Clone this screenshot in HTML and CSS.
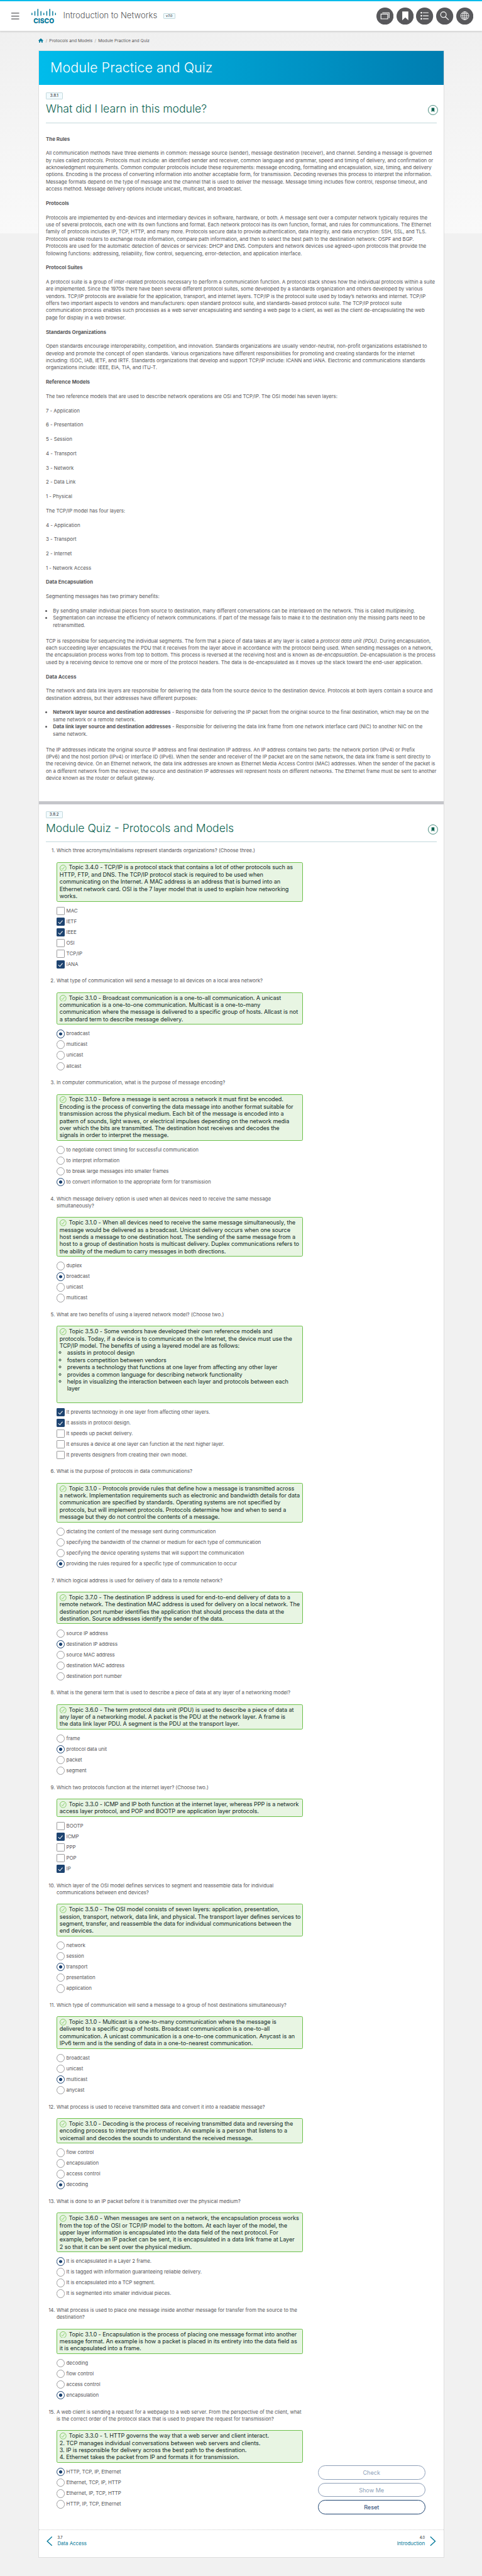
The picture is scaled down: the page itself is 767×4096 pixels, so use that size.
FILE: index.html
```html
<!DOCTYPE html>
<html lang="en">
<head>
<meta charset="utf-8">
<title>Module Practice and Quiz</title>
<link rel="stylesheet" href="styles.css">
</head>
<body>
<svg class="defs" width="0" height="0">
  <symbol id="ok" viewBox="0 0 19 19"><circle cx="9.5" cy="9.5" r="8.6" fill="none" stroke="#6cc04a" stroke-width="1.5"/><path d="M5.2 10l3 3 5.3-7.5" fill="none" stroke="#6cc04a" stroke-width="1.4"/></symbol>
  <symbol id="mark" viewBox="0 0 28 28"><circle cx="14" cy="14" r="13.2" fill="#fff" stroke="#0b6351" stroke-width="1.3"/><path d="M10 8h8v12l-4-3.6-4 3.6z" fill="#0b6351"/></symbol>
</svg>
<div class="page">
<header class="top">
  <svg class="burger" width="22" height="20" viewBox="0 0 22 20"><path d="M0 1.4h22M0 9.7h22M0 18h22" stroke="#58585b" stroke-width="2.2"/></svg>
  <svg class="logo" width="69" height="46" viewBox="0 0 69 46"><path d="M1.5 12.5v4M9.7 7.500v10.500M18.100 1.500v18M26.600 7.500v10.500M34.700 12.500v4M43 7.500v10.500M51.400 1.500v18M59.600 7.500v10.500M67.500 12.500v4" stroke="#04799a" stroke-width="2.600" stroke-linecap="round"/><text x="5.500" y="40.500" textLength="58" lengthAdjust="spacingAndGlyphs">CISCO</text></svg>
  <div class="course">Introduction to Networks</div>
  <span class="tag ver">v7.0</span>
  <nav class="tools">
    <svg viewBox="0 0 48 48"><circle cx="24" cy="24" r="24"/><g class="ln"><path d="M16.500 14.500h19v15"/><path d="M12.700 18.200h19v13.500h-19z"/></g></svg>
    <svg viewBox="0 0 48 48"><circle cx="24" cy="24" r="24"/><path d="M16 11h17v24.500l-8.500-8-8.500 8z" fill="#fff"/></svg>
    <svg viewBox="0 0 48 48"><circle cx="24" cy="24" r="24"/><g class="ln"><path d="M19.500 14.500h15.500M19.500 23h15.500M19.500 31.500h15.500"/></g><g fill="#fff"><circle cx="15" cy="14.500" r="2.300"/><circle cx="15" cy="23" r="2.300"/><circle cx="15" cy="31.500" r="2.300"/></g></svg>
    <svg viewBox="0 0 48 48"><circle cx="24" cy="24" r="24"/><g class="ln"><circle cx="20.500" cy="20" r="7.800"/><path d="M25.500 25.500l9.500 9"/></g></svg>
    <svg viewBox="0 0 48 48"><circle cx="24" cy="24" r="24"/><g class="ln thin"><circle cx="24" cy="23" r="11.300"/><ellipse cx="24" cy="23" rx="5.500" ry="11.300"/><path d="M24 11.700v22.600M12.700 23h22.600M14.500 17h19M14.500 29h19"/></g></svg>
  </nav>
</header>
<div class="crumbs"><svg width="14" height="12" viewBox="0 0 14 12"><path d="M7 0l7 6-1 1-1-.8V12H8.800V8H5.200v4H2V6.200L1 7 0 6z" fill="#04799a"/></svg><i>/</i><span>Protocols and Models</span><i>/</i><span>Module Practice and Quiz</span></div>
<main class="card">
<h1>Module Practice and Quiz</h1>
<section class="sec learn">
<span class="tag">3.8.1</span>
<div class="head"><h2>What did I learn in this module?</h2><svg width="28" height="28"><use href="#mark"/></svg></div>
<div class="text">
<h3>The Rules</h3>
<p>All communication methods have three elements in common: message source (sender), message destination (receiver), and channel. Sending a message is governed<br>by rules called <em>protocols</em>. Protocols must include: an identified sender and receiver, common language and grammar, speed and timing of delivery, and confirmation or<br>acknowledgment requirements. Common computer protocols include these requirements: message encoding, formatting and encapsulation, size, timing, and delivery<br>options. Encoding is the process of converting information into another acceptable form, for transmission. Decoding reverses this process to interpret the information.<br>Message formats depend on the type of message and the channel that is used to deliver the message. Message timing includes flow control, response timeout, and<br>access method. Message delivery options include unicast, multicast, and broadcast.</p>
<h3>Protocols</h3>
<p>Protocols are implemented by end-devices and intermediary devices in software, hardware, or both. A message sent over a computer network typically requires the<br>use of several protocols, each one with its own functions and format. Each network protocol has its own function, format, and rules for communications. The Ethernet<br>family of protocols includes IP, TCP, HTTP, and many more. Protocols secure data to provide authentication, data integrity, and data encryption: SSH, SSL, and TLS.<br>Protocols enable routers to exchange route information, compare path information, and then to select the best path to the destination network: OSPF and BGP.<br>Protocols are used for the automatic detection of devices or services: DHCP and DNS. Computers and network devices use agreed-upon protocols that provide the<br>following functions: addressing, reliability, flow control, sequencing, error-detection, and application interface.</p>
<h3>Protocol Suites</h3>
<p>A protocol suite is a group of inter-related protocols necessary to perform a communication function. A protocol stack shows how the individual protocols within a suite<br>are implemented. Since the 1970s there have been several different protocol suites, some developed by a standards organization and others developed by various<br>vendors. TCP/IP protocols are available for the application, transport, and internet layers. TCP/IP is the protocol suite used by today’s networks and internet. TCP/IP<br>offers two important aspects to vendors and manufacturers: open standard protocol suite, and standards-based protocol suite. The TCP/IP protocol suite<br>communication process enables such processes as a web server encapsulating and sending a web page to a client, as well as the client de-encapsulating the web<br>page for display in a web browser.</p>
<h3>Standards Organizations</h3>
<p>Open standards encourage interoperability, competition, and innovation. Standards organizations are usually vendor-neutral, non-profit organizations established to<br>develop and promote the concept of open standards. Various organizations have different responsibilities for promoting and creating standards for the internet<br>including: ISOC, IAB, IETF, and IRTF. Standards organizations that develop and support TCP/IP include: ICANN and IANA. Electronic and communications standards<br>organizations include: IEEE, EIA, TIA, and ITU-T.</p>
<h3>Reference Models</h3>
<p>The two reference models that are used to describe network operations are OSI and TCP/IP. The OSI model has seven layers:</p>
<p>7 - Application</p>
<p>6 - Presentation</p>
<p>5 - Session</p>
<p>4 - Transport</p>
<p>3 - Network</p>
<p>2 - Data Link</p>
<p>1 - Physical</p>
<p>The TCP/IP model has four layers:</p>
<p>4 - Application</p>
<p>3 - Transport</p>
<p>2 - Internet</p>
<p>1 - Network Access</p>
<h3>Data Encapsulation</h3>
<p>Segmenting messages has two primary benefits:</p>
<ul>
<li>By sending smaller individual pieces from source to destination, many different conversations can be interleaved on the network. This is called <em>multiplexing</em>.</li>
<li>Segmentation can increase the efficiency of network communications. If part of the message fails to make it to the destination only the missing parts need to be<br>retransmitted.</li>
</ul>
<p>TCP is responsible for sequencing the individual segments. The form that a piece of data takes at any layer is called a <em>protocol data unit (PDU)</em>. During encapsulation,<br>each succeeding layer encapsulates the PDU that it receives from the layer above in accordance with the protocol being used. When sending messages on a network,<br>the encapsulation process works from top to bottom. This process is reversed at the receiving host and is known as <em>de-encapsulation</em>. De-encapsulation is the process<br>used by a receiving device to remove one or more of the protocol headers. The data is de-encapsulated as it moves up the stack toward the end-user application.</p>
<h3>Data Access</h3>
<p>The network and data link layers are responsible for delivering the data from the source device to the destination device. Protocols at both layers contain a source and<br>destination address, but their addresses have different purposes:</p>
<ul>
<li><b>Network layer source and destination addresses</b> - Responsible for delivering the IP packet from the original source to the final destination, which may be on the<br>same network or a remote network.</li>
<li><b>Data link layer source and destination addresses</b> - Responsible for delivering the data link frame from one network interface card (NIC) to another NIC on the<br>same network.</li>
</ul>
<p>The IP addresses indicate the original source IP address and final destination IP address. An IP address contains two parts: the network portion (IPv4) or Prefix<br>(IPv6) and the host portion (IPv4) or Interface ID (IPv6). When the sender and receiver of the IP packet are on the same network, the data link frame is sent directly to<br>the receiving device. On an Ethernet network, the data link addresses are known as Ethernet Media Access Control (MAC) addresses. When the sender of the packet is<br>on a different network from the receiver, the source and destination IP addresses will represent hosts on different networks. The Ethernet frame must be sent to another<br>device known as the router or default gateway.</p>
</div>
</section>
<div class="bar"></div>
<section class="sec quiz">
<span class="tag">3.8.2</span>
<div class="head"><h2>Module Quiz - Protocols and Models</h2><svg width="28" height="28"><use href="#mark"/></svg></div>
<div class="cols">
<ol class="qs">
<li><div class="q">Which three acronyms/initialisms represent standards organizations? (Choose three.)</div>
<div class="box"><svg><use href="#ok"/></svg>Topic 3.4.0 - TCP/IP is a protocol stack that contains a lot of other protocols such as<br>HTTP, FTP, and DNS. The TCP/IP protocol stack is required to be used when<br>communicating on the Internet. A MAC address is an address that is burned into an<br>Ethernet network card. OSI is the 7 layer model that is used to explain how networking<br>works.</div>
<ul class="opts check"><li>MAC</li><li class="on">IETF</li><li class="on">IEEE</li><li>OSI</li><li>TCP/IP</li><li class="on">IANA</li></ul></li>
<li><div class="q">What type of communication will send a message to all devices on a local area network?</div>
<div class="box"><svg><use href="#ok"/></svg>Topic 3.1.0 - Broadcast communication is a one-to-all communication. A unicast<br>communication is a one-to-one communication. Multicast is a one-to-many<br>communication where the message is delivered to a specific group of hosts. Allcast is not<br>a standard term to describe message delivery.</div>
<ul class="opts"><li class="on">broadcast</li><li>multicast</li><li>unicast</li><li>allcast</li></ul></li>
<li><div class="q">In computer communication, what is the purpose of message encoding?</div>
<div class="box"><svg><use href="#ok"/></svg>Topic 3.1.0 - Before a message is sent across a network it must first be encoded.<br>Encoding is the process of converting the data message into another format suitable for<br>transmission across the physical medium. Each bit of the message is encoded into a<br>pattern of sounds, light waves, or electrical impulses depending on the network media<br>over which the bits are transmitted. The destination host receives and decodes the<br>signals in order to interpret the message.</div>
<ul class="opts"><li>to negotiate correct timing for successful communication</li><li>to interpret information</li><li>to break large messages into smaller frames</li><li class="on">to convert information to the appropriate form for transmission</li></ul></li>
<li><div class="q">Which message delivery option is used when all devices need to receive the same message<br>simultaneously?</div>
<div class="box"><svg><use href="#ok"/></svg>Topic 3.1.0 - When all devices need to receive the same message simultaneously, the<br>message would be delivered as a broadcast. Unicast delivery occurs when one source<br>host sends a message to one destination host. The sending of the same message from a<br>host to a group of destination hosts is multicast delivery. Duplex communications refers to<br>the ability of the medium to carry messages in both directions.</div>
<ul class="opts"><li>duplex</li><li class="on">broadcast</li><li>unicast</li><li>multicast</li></ul></li>
<li><div class="q">What are two benefits of using a layered network model? (Choose two.)</div>
<div class="box"><svg><use href="#ok"/></svg>Topic 3.5.0 - Some vendors have developed their own reference models and<br>protocols. Today, if a device is to communicate on the Internet, the device must use the<br>TCP/IP model. The benefits of using a layered model are as follows:
<ul class="circ"><li>assists in protocol design</li><li>fosters competition between vendors</li><li>prevents a technology that functions at one layer from affecting any other layer</li><li>provides a common language for describing network functionality</li><li>helps in visualizing the interaction between each layer and protocols between each<br>layer</li></ul></div>
<ul class="opts check"><li class="on">It prevents technology in one layer from affecting other layers.</li><li class="on">It assists in protocol design.</li><li>It speeds up packet delivery.</li><li>It ensures a device at one layer can function at the next higher layer.</li><li>It prevents designers from creating their own model.</li></ul></li>
<li><div class="q">What is the purpose of protocols in data communications?</div>
<div class="box"><svg><use href="#ok"/></svg>Topic 3.1.0 - Protocols provide rules that define how a message is transmitted across<br>a network. Implementation requirements such as electronic and bandwidth details for data<br>communication are specified by standards. Operating systems are not specified by<br>protocols, but will implement protocols. Protocols determine how and when to send a<br>message but they do not control the contents of a message.</div>
<ul class="opts"><li>dictating the content of the message sent during communication</li><li>specifying the bandwidth of the channel or medium for each type of communication</li><li>specifying the device operating systems that will support the communication</li><li class="on">providing the rules required for a specific type of communication to occur</li></ul></li>
<li><div class="q">Which logical address is used for delivery of data to a remote network?</div>
<div class="box"><svg><use href="#ok"/></svg>Topic 3.7.0 - The destination IP address is used for end-to-end delivery of data to a<br>remote network. The destination MAC address is used for delivery on a local network. The<br>destination port number identifies the application that should process the data at the<br>destination. Source addresses identify the sender of the data.</div>
<ul class="opts"><li>source IP address</li><li class="on">destination IP address</li><li>source MAC address</li><li>destination MAC address</li><li>destination port number</li></ul></li>
<li><div class="q">What is the general term that is used to describe a piece of data at any layer of a networking model?</div>
<div class="box"><svg><use href="#ok"/></svg>Topic 3.6.0 - The term protocol data unit (PDU) is used to describe a piece of data at<br>any layer of a networking model. A packet is the PDU at the network layer. A frame is<br>the data link layer PDU. A segment is the PDU at the transport layer.</div>
<ul class="opts"><li>frame</li><li class="on">protocol data unit</li><li>packet</li><li>segment</li></ul></li>
<li><div class="q">Which two protocols function at the internet layer? (Choose two.)</div>
<div class="box"><svg><use href="#ok"/></svg>Topic 3.3.0 - ICMP and IP both function at the internet layer, whereas PPP is a network<br>access layer protocol, and POP and BOOTP are application layer protocols.</div>
<ul class="opts check"><li>BOOTP</li><li class="on">ICMP</li><li>PPP</li><li>POP</li><li class="on">IP</li></ul></li>
<li><div class="q">Which layer of the OSI model defines services to segment and reassemble data for individual<br>communications between end devices?</div>
<div class="box"><svg><use href="#ok"/></svg>Topic 3.5.0 - The OSI model consists of seven layers: application, presentation,<br>session, transport, network, data link, and physical. The transport layer defines services to<br>segment, transfer, and reassemble the data for individual communications between the<br>end devices.</div>
<ul class="opts"><li>network</li><li>session</li><li class="on">transport</li><li>presentation</li><li>application</li></ul></li>
<li><div class="q">Which type of communication will send a message to a group of host destinations simultaneously?</div>
<div class="box"><svg><use href="#ok"/></svg>Topic 3.1.0 - Multicast is a one-to-many communication where the message is<br>delivered to a specific group of hosts. Broadcast communication is a one-to-all<br>communication. A unicast communication is a one-to-one communication. Anycast is an<br>IPv6 term and is the sending of data in a one-to-nearest communication.</div>
<ul class="opts"><li>broadcast</li><li>unicast</li><li class="on">multicast</li><li>anycast</li></ul></li>
<li><div class="q">What process is used to receive transmitted data and convert it into a readable message?</div>
<div class="box"><svg><use href="#ok"/></svg>Topic 3.1.0 - Decoding is the process of receiving transmitted data and reversing the<br>encoding process to interpret the information. An example is a person that listens to a<br>voicemail and decodes the sounds to understand the received message.</div>
<ul class="opts"><li>flow control</li><li>encapsulation</li><li>access control</li><li class="on">decoding</li></ul></li>
<li><div class="q">What is done to an IP packet before it is transmitted over the physical medium?</div>
<div class="box"><svg><use href="#ok"/></svg>Topic 3.6.0 - When messages are sent on a network, the encapsulation process works<br>from the top of the OSI or TCP/IP model to the bottom. At each layer of the model, the<br>upper layer information is encapsulated into the data field of the next protocol. For<br>example, before an IP packet can be sent, it is encapsulated in a data link frame at Layer<br>2 so that it can be sent over the physical medium.</div>
<ul class="opts"><li class="on">It is encapsulated in a Layer 2 frame.</li><li>It is tagged with information guaranteeing reliable delivery.</li><li>It is encapsulated into a TCP segment.</li><li>It is segmented into smaller individual pieces.</li></ul></li>
<li><div class="q">What process is used to place one message inside another message for transfer from the source to the<br>destination?</div>
<div class="box"><svg><use href="#ok"/></svg>Topic 3.1.0 - Encapsulation is the process of placing one message format into another<br>message format. An example is how a packet is placed in its entirety into the data field as<br>it is encapsulated into a frame.</div>
<ul class="opts"><li>decoding</li><li>flow control</li><li>access control</li><li class="on">encapsulation</li></ul></li>
<li><div class="q">A web client is sending a request for a webpage to a web server. From the perspective of the client, what<br>is the correct order of the protocol stack that is used to prepare the request for transmission?</div>
<div class="box"><svg><use href="#ok"/></svg>Topic 3.3.0 - 1. HTTP governs the way that a web server and client interact.<br>2. TCP manages individual conversations between web servers and clients.<br>3. IP is responsible for delivery across the best path to the destination.<br>4. Ethernet takes the packet from IP and formats it for transmission.</div>
<ul class="opts"><li class="on">HTTP, TCP, IP, Ethernet</li><li>Ethernet, TCP, IP, HTTP</li><li>Ethernet, IP, TCP, HTTP</li><li>HTTP, IP, TCP, Ethernet</li></ul></li>
</ol>
<div class="btns"><span class="btn off">Check</span><span class="btn off">Show Me</span><span class="btn">Reset</span></div>
</div>
</section>
<footer class="pager">
<svg width="17" height="27" viewBox="0 0 17 27"><path d="M15.500 1L2 13.500 15.500 26" fill="none" stroke="#04799a" stroke-width="2.400"/></svg>
<div class="lnk"><small>3.7</small><span>Data Access</span></div>
<div class="lnk r"><small>4.0</small><span>Introduction</span></div>
<svg width="17" height="27" viewBox="0 0 17 27"><path d="M1.500 1L15 13.500 1.500 26" fill="none" stroke="#04799a" stroke-width="2.400"/></svg>
</footer>
</main>
</div>
</body>
</html>
```
FILE: styles.css
```css
* { box-sizing: border-box; }
html { background: #f1f1f1; overflow: hidden; }
body { margin: 0; font-family: Inter, "Liberation Sans", sans-serif; color: #58585b; }
ul, ol, p, h1, h2, h3 { margin: 0; padding: 0; list-style: none; }
.defs { position: absolute; }
.page { zoom: 0.56857; width: 1348.900px; height: 7203px; white-space: nowrap; font-size: 14px; line-height: 20px; background: linear-gradient(#f0f0f0, #f9f9f9) 0 87px / 100% 567px no-repeat; }

/* header */
.top { height: 88px; border-top: 4px solid #00bceb; border-bottom: 1px solid #dcdcdc; background: #fff; display: flex; align-items: center; padding: 0 23.900px 0 32px; box-shadow: 0 1px 3px rgba(0,0,0,.12); }
.logo { margin: 5px 0 0 34px; }
.logo text { font: 800 19px Inter, sans-serif; fill: #04799a; }
.course { margin: -4px 0 0 20px; font-size: 23px; font-weight: 300; line-height: 30px; }
.tag { display: block; width: 47px; height: 20px; border: 1px solid #c3d9dc; background: #f2fbff; border-radius: 2px; color: #111; font-size: 11.200px; line-height: 17px; text-align: center; }
.ver { width: 33px; height: 15px; margin-left: 17px; font-size: 9.500px; line-height: 12px; }
.tools { margin: 1px 0 0 auto; display: flex; gap: 8px; }
.tools svg { width: 48px; height: 48px; fill: #58585b; }
.tools .ln { fill: none; stroke: #fff; stroke-width: 2; }
.tools .thin { stroke-width: 1.500; }
.crumbs { display: flex; align-items: center; height: 20px; margin: 15px 0 0 108px; font-size: 11.850px; }
.crumbs i { color: #a0a0a0; font-style: normal; margin: 0 5.800px; }

/* content card */
.card { width: 1136px; margin: 17px 0 0 107px; background: #fff; border: 1px solid #dedede; height: 7013px; display: flex; flex-direction: column; }
h1 { height: 96px; line-height: 92px; padding-left: 32px; font-size: 38px; font-weight: 300; color: #fff; background: linear-gradient(90deg, #00bceb, #007db0); }
.sec { padding: 20px 19.500px 0; }
.head { display: flex; justify-content: space-between; align-items: center; width: 1094px; border-bottom: 1px solid #c3d9dc; padding: 8px 0 17.500px; height: 67px; }
.head svg { margin: 6px -3.500px 0 0; }
h2 { font-size: 31px; line-height: 40px; font-weight: 300; color: #0b6351; }
.text { padding-top: 34.500px; display: flex; flex-direction: column; gap: 20px; letter-spacing: -0.083px; }
h3, .text b { font-size: 14px; line-height: 20px; font-weight: 700; letter-spacing: 0; }
.text ul { padding-left: 20px; margin-bottom: 4px; }
.text ul li { list-style: disc; }
.learn { height: 2003px; }
.bar { height: 8px; background: #c5c6ca; }

/* quiz */
.quiz { height: 4825px; }
.cols { display: flex; justify-content: space-between; width: 1062px; padding-top: 14px; }
.qs { width: 690px; margin-left: 30px; counter-reset: q; display: flex; flex-direction: column; gap: 27px; }
.qs > li { counter-increment: q; }
.q { display: flex; margin-left: -36px; letter-spacing: -0.065px; }
.q::before { content: counter(q) "."; width: 31.500px; margin-right: 4.500px; text-align: right; }
.box { border: 1px solid #6cc04a; border-radius: 4px; background: #e8f5e3; color: #10281f; margin: 21px 0 16px; padding: 3.300px 6.700px 3.800px; font-size: 16px; letter-spacing: -0.09px; }
.box svg { width: 19px; height: 19px; margin: -2px 7px -3px 0; vertical-align: -2px; }
.circ { padding: 0 0 24px 21px; }
.circ li { list-style: circle; }
.opts { display: grid; gap: 10px; letter-spacing: -0.12px; }
.opts li { height: 20px; display: flex; align-items: center; line-height: 18px; padding-bottom: 2px; position: relative; }
.opts li::before { content: ""; width: 20px; height: 20px; margin: 2px 4px 0 0; border: 1px solid #9a9a9c; border-radius: 50%; background: #fff; flex: none; }
.opts .on::before { border: 2px solid #1e4471; background: radial-gradient(circle, #1e4471 4px, #fff 4.800px); }
.check li::before, .opts.check .on::before { border-radius: 2px; }
.opts.check .on::before { background: #1e4471; }
.check .on::after { content: ""; position: absolute; left: 7px; top: 3.500px; width: 6px; height: 11px; border: solid #fff; border-width: 0 2px 2px 0; transform: rotate(40deg); }
.btns { width: 301px; align-self: flex-end; display: flex; flex-direction: column; gap: 8px; margin-bottom: -18px; }
.btn { height: 40px; border: 1.500px solid #1e4471; border-radius: 20px; color: #1e4471; font-size: 16px; line-height: 37px; text-align: center; }
.off { border-color: #8e9fb8; color: #8e9fb8; }

/* previous / next */
.pager { border-top: 1px dotted #cfcfcf; flex: 1; display: flex; align-items: flex-start; padding: 17.500px 21px 0; color: #04799a; }
.lnk { display: flex; flex-direction: column; margin: -1px 14px 0; }
.lnk small { font-size: 10px; line-height: 12px; color: #222; }
.lnk span { line-height: 19px; letter-spacing: -0.080px; }
.r { margin-left: auto; text-align: right; }
```
